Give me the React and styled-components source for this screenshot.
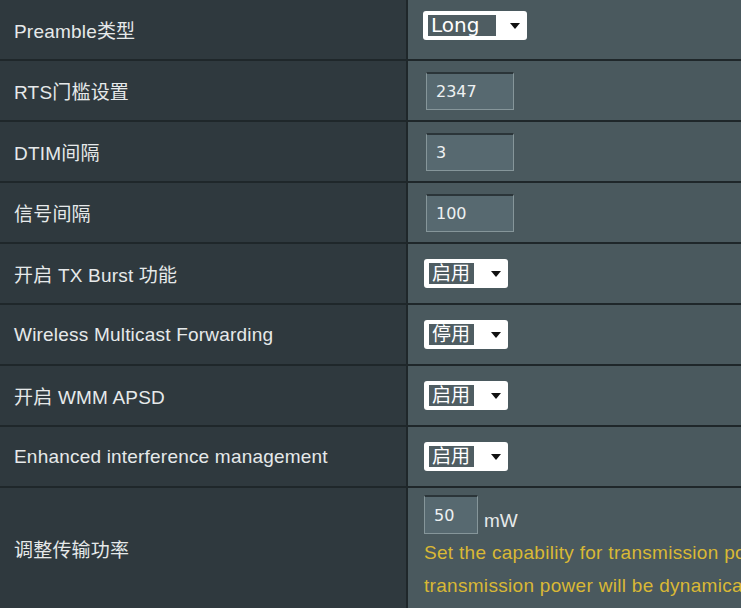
import React from "react";
import styled, { createGlobalStyle } from "styled-components";

const Global = createGlobalStyle`
  html, body { margin: 0; padding: 0; }
  body {
    background: #4a595e;
    overflow: hidden;
    width: 741px;
    height: 608px;
  }
`;

const Table = styled.div`
  display: flex;
  flex-direction: column;
  width: 741px;
  overflow: hidden;
`;

const Row = styled.div`
  display: flex;
  height: ${(p) => p.$h}px;
  border-bottom: 2px solid #1f272a;
`;

const LastRow = styled.div`
  display: flex;
  height: 130px;
`;

const Label = styled.div`
  width: 392px;
  flex: none;
  padding-left: 14px;
  padding-bottom: ${(p) => p.$pb ?? 0}px;
  background: #2f393e;
  border-right: 2px solid #1f272a;
  display: flex;
  align-items: center;
  color: #e6e9ea;
  font-family: "Liberation Sans", "Noto Sans CJK SC", sans-serif;
  font-size: 19px;
  letter-spacing: 0.2px;
  white-space: nowrap;
`;

const Value = styled.div`
  flex: 1;
  min-width: 0;
  background: #4a595e;
  display: flex;
  align-items: ${(p) => (p.$top ? "flex-start" : "center")};
  padding-top: ${(p) => p.$top ?? 0}px;
  padding-left: ${(p) => p.$pl ?? 16}px;
`;

const LastValue = styled.div`
  flex: 1;
  min-width: 0;
  background: #4a595e;
  padding: 7px 0 0 16px;
  overflow: hidden;
`;

const SelectBox = styled.div`
  width: ${(p) => p.$w}px;
  height: 29px;
  box-sizing: border-box;
  background: #ffffff;
  border-radius: 3px;
  display: flex;
  align-items: center;
  padding-left: 5px;
  position: relative;
`;

const SelText = styled.span`
  background: #4f5d62;
  color: #ffffff;
  font-family: "DejaVu Sans", "Noto Sans CJK SC", sans-serif;
  font-size: ${(p) => p.$fs}px;
  line-height: 21px;
  height: 21px;
  padding: 0 ${(p) => p.$pr}px 0 3px;
  white-space: nowrap;
`;

const Arrow = styled.span`
  position: absolute;
  right: ${(p) => p.$r}px;
  top: 12px;
  width: 0;
  height: 0;
  border-left: 5px solid transparent;
  border-right: 5px solid transparent;
  border-top: 6px solid #111;
`;

const TextInput = styled.div`
  width: ${(p) => p.$w}px;
  height: ${(p) => p.$h}px;
  box-sizing: border-box;
  background: #576970;
  border: 1px solid #86969a;
  border-top: 2px solid #2b3539;
  color: #eef1f2;
  font-family: "DejaVu Sans", sans-serif;
  font-size: 16px;
  display: flex;
  align-items: center;
  padding-left: 9px;
`;

const InputLine = styled.div`
  display: flex;
  align-items: flex-end;
  gap: 6px;
`;

const Unit = styled.span`
  color: #e6e9ea;
  font-family: "Liberation Sans", sans-serif;
  font-size: 19px;
  padding-bottom: 2px;
`;

const Help = styled.div`
  color: #d9b835;
  font-family: "Liberation Sans", sans-serif;
  font-size: 19px;
  letter-spacing: 0.3px;
  line-height: 33px;
  white-space: nowrap;
  margin-top: 2px;
`;

const Select = ({ text, w, fs, pr, r }) => (
  <SelectBox $w={w}>
    <SelText $fs={fs} $pr={pr}>{text}</SelText>
    <Arrow $r={r} />
  </SelectBox>
);

const Input = ({ value, w = 88, h = 38 }) => (
  <TextInput $w={w} $h={h}>{value}</TextInput>
);

export default function App() {
  return (
    <>
      <Global />
      <Table>
        <Row $h={59}>
          <Label>Preamble类型</Label>
          <Value $pl={15} $top={11}>
            <Select text="Long" w={104} fs={20} pr={17} r={7} />
          </Value>
        </Row>
        <Row $h={59}>
          <Label>RTS门槛设置</Label>
          <Value $pl={18}>
            <Input value="2347" />
          </Value>
        </Row>
        <Row $h={59}>
          <Label>DTIM间隔</Label>
          <Value $pl={18}>
            <Input value="3" />
          </Value>
        </Row>
        <Row $h={59}>
          <Label>信号间隔</Label>
          <Value $pl={18}>
            <Input value="100" />
          </Value>
        </Row>
        <Row $h={59}>
          <Label>开启 TX Burst 功能</Label>
          <Value $pl={16}>
            <Select text="启用" w={84} fs={19} pr={4} r={7} />
          </Value>
        </Row>
        <Row $h={59}>
          <Label>Wireless Multicast Forwarding</Label>
          <Value $pl={16}>
            <Select text="停用" w={84} fs={19} pr={4} r={7} />
          </Value>
        </Row>
        <Row $h={59}>
          <Label>开启 WMM APSD</Label>
          <Value $pl={16}>
            <Select text="启用" w={84} fs={19} pr={4} r={7} />
          </Value>
        </Row>
        <Row $h={59}>
          <Label>Enhanced interference management</Label>
          <Value $pl={16}>
            <Select text="启用" w={84} fs={19} pr={4} r={7} />
          </Value>
        </Row>
        <LastRow>
          <Label $pb={10}>调整传输功率</Label>
          <LastValue>
            <InputLine>
              <Input value="50" w={54} h={39} />
              <Unit>mW</Unit>
            </InputLine>
            <Help>
              Set the capability for transmission power. The maximum value is 200mW and the real
              <br />
              transmission power will be dynamically adjusted to meet regional regulations
            </Help>
          </LastValue>
        </LastRow>
      </Table>
    </>
  );
}
